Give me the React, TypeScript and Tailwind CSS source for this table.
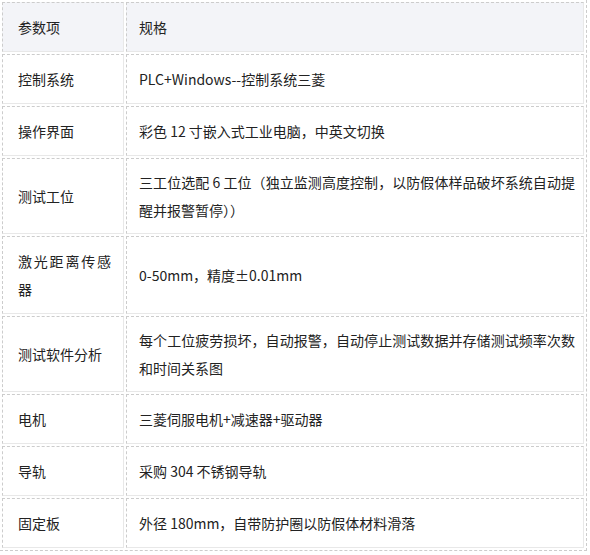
import React from 'react';

type Row = { name: string; spec: React.ReactNode; tight?: boolean };

const rows: Row[] = [
  { name: '控制系统', spec: 'PLC+Windows--控制系统三菱' },
  { name: '操作界面', spec: '彩色 12 寸嵌入式工业电脑，中英文切换' },
  {
    name: '测试工位',
    tight: true,
    spec: (
      <>
        <span className="block [text-align-last:justify]">三工位选配 6 工位（独立监测高度控制，以防假体样品破坏系统自动提</span>
        <span className="block">醒并报警暂停））</span>
      </>
    ),
  },
  { name: '激光距离传感器', spec: '0-50mm，精度±0.01mm' },
  {
    name: '测试软件分析',
    tight: true,
    spec: (
      <>
        <span className="block [text-align-last:justify]">每个工位疲劳损坏，自动报警，自动停止测试数据并存储测试频率次数</span>
        <span className="block">和时间关系图</span>
      </>
    ),
  },
  { name: '电机', spec: '三菱伺服电机+减速器+驱动器' },
  { name: '导轨', spec: '采购 304 不锈钢导轨' },
  { name: '固定板', spec: '外径 180mm，自带防护圈以防假体材料滑落' },
];

const cell =
  'border border-dashed border-[#cccccc] border-r-[#e8e8e8] border-b-[#e8e8e8] [border-right-style:solid] [border-bottom-style:solid] align-middle';

const App: React.FC = () => {
  return (
    <div className="w-[590px] h-[555px] bg-white font-['Noto_Sans_CJK_SC','Liberation_Sans',sans-serif] text-[14px] leading-[28px] text-[#222]">
      <table className="w-[587px] table-fixed border-separate border-spacing-[2px] border-r border-b border-dashed border-[#cccccc]">
        <colgroup>
          <col className="w-[122px]" />
          <col className="w-[458px]" />
        </colgroup>
        <tbody>
          <tr>
            <td className={`${cell} py-[10px] bg-[#f3f4f8] pl-[15px] pr-[12px]`}>参数项</td>
            <td className={`${cell} py-[10px] bg-[#f3f4f8] pl-[12px] pr-[8px]`}>规格</td>
          </tr>
          {rows.map((r) => (
            <tr key={r.name}>
              <td className={`${cell} ${r.tight ? 'py-[9px]' : 'py-[10px]'} pl-[15px] pr-[12px] text-justify`}>{r.name}</td>
              <td className={`${cell} ${r.tight ? 'py-[9px]' : 'py-[10px]'} pl-[12px] pr-[8px] text-justify`}>{r.spec}</td>
            </tr>
          ))}
        </tbody>
      </table>
    </div>
  );
};

export default App;
